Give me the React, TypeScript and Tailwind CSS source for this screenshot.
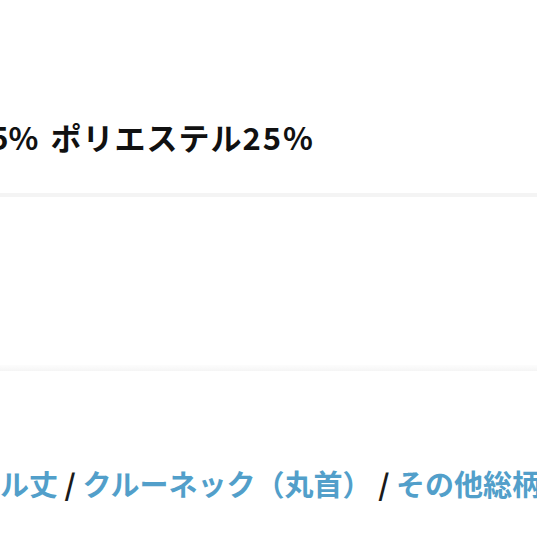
export default function App() {
  const font = { fontFamily: '"Noto Sans CJK JP", "Noto Sans", sans-serif' };

  return (
    <div className="w-[537px] h-[537px] overflow-hidden bg-white" style={font}>
      <div className="h-[105px]" />
      <div className="h-[62px] flex items-center whitespace-nowrap text-[31px] font-bold text-[#111111] leading-none">
        <span className="ml-[-59px]">綿75%</span>
        <span className="ml-[12px] tracking-[1px]">ポリエステル</span>
        <span className="tracking-[2px]">25%</span>
      </div>
      <div className="h-[26px]" />
      <div className="h-[4px] bg-[#f4f4f4]" />
      <div className="h-[168px]" />
      <div className="h-[6px] bg-gradient-to-b from-[#fdfdfd] to-[#f5f5f5]" />
      <div className="h-[92px]" />
      <div className="h-[40px] flex items-center whitespace-nowrap text-[29px] font-bold leading-none">
        <p className="ml-[-87px]">
          <span className="text-[#529fca]">ノーマル丈</span>
          <span className="text-[#1a1a1a]"> / </span>
          <span className="text-[#529fca]">クルーネック（丸首）</span>
          <span className="text-[#1a1a1a]"> / </span>
          <span className="text-[#529fca]">その他総柄</span>
        </p>
      </div>
    </div>
  );
}
